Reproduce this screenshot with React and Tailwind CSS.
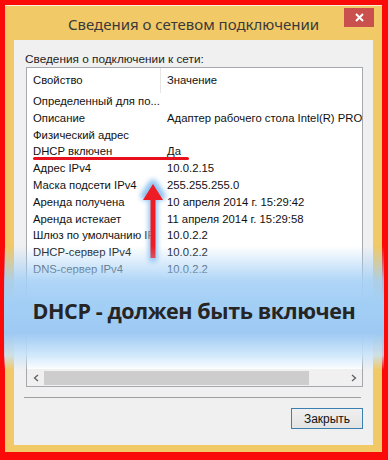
const rows = [
  ["Определенный для по...", ""],
  ["Описание", "Адаптер рабочего стола Intel(R) PRO/1000 MT"],
  ["Физический адрес", ""],
  ["DHCP включен", "Да"],
  ["Адрес IPv4", "10.0.2.15"],
  ["Маска подсети IPv4", "255.255.255.0"],
  ["Аренда получена", "10 апреля 2014 г. 15:29:42"],
  ["Аренда истекает", "11 апреля 2014 г. 15:29:58"],
  ["Шлюз по умолчанию IP", "10.0.2.2"],
  ["DHCP-сервер IPv4", "10.0.2.2"],
  ["DNS-сервер IPv4", "10.0.2.2"],
];

function Arrow() {
  return (
    <svg width="40" height="100" viewBox="0 0 40 100" className="absolute left-[133px] top-[170px]">
      <defs>
        <filter id="glow" x="-50%" y="-50%" width="200%" height="200%">
          <feGaussianBlur stdDeviation="2.5" />
        </filter>
      </defs>
      <g stroke="#8ec3f2" strokeWidth="9" fill="none" strokeLinecap="round" strokeLinejoin="round" filter="url(#glow)">
        <path d="M20 16 L20 88" />
        <path d="M12 26 L20 14 L28 26" />
      </g>
      <path d="M20 24 L20 88" stroke="#ee1c25" strokeWidth="5" />
      <path d="M10 30 L20 14 L30 30 Z" fill="#ee1c25" />
    </svg>
  );
}

export default function App() {
  return (
    <div className="relative w-[388px] h-[460px] overflow-hidden bg-[#fb0a0a] pt-[5px] pl-[5px] font-['Liberation_Sans',sans-serif]">
      <div className="w-[377px] h-[447px] bg-[#f1c966] border-t border-[#f7f0dc] flex flex-col">
        <div className="relative h-[34px] flex items-center justify-center">
          <span className="text-[15px] text-[#3a3a3a] font-['Noto_Sans',sans-serif] mt-[2px]">
            Сведения о сетевом подключении
          </span>
          <div className="absolute right-[8px] top-[2px] w-[30px] h-[19px] bg-[#c9504c] flex items-center justify-center">
            <svg width="9" height="9" viewBox="0 0 9 9">
              <path d="M1 1 L8 8 M8 1 L1 8" stroke="#fff" strokeWidth="2" />
            </svg>
          </div>
        </div>
        <div className="mx-[9px] h-[405px] bg-[#f0f0f0] flex flex-col pl-[11px] pr-[10px]">
          <div className="pt-[12px] h-[27px] text-[11.8px] text-[#1e1e1e] leading-[15px]">
            Сведения о подключении к сети:
          </div>
          <div className="ml-[1px] w-[337px] h-[320px] bg-white border border-[#a5a8ad] flex flex-col text-[11.3px] text-[#111]">
            <div className="flex h-[25px] shrink-0">
              <div className="w-[134px] pl-[6px] flex items-center border-r border-[#e5e5e5]">Свойство</div>
              <div className="pl-[6px] flex items-center">Значение</div>
            </div>
            <div className="flex-1 overflow-hidden">
              {rows.map(([k, v]) => (
                <div key={k} className="flex h-[16.8px] items-center whitespace-nowrap">
                  <div className="w-[134px] shrink-0 pl-[6px] overflow-hidden">{k}</div>
                  <div className="pl-[6px]">{v}</div>
                </div>
              ))}
            </div>
            <div className="h-[17px] shrink-0 flex items-center bg-[#f0f0f0]">
              <div className="w-[17px] flex justify-center">
                <svg width="6" height="8" viewBox="0 0 6 8">
                  <path d="M5 1 L1.5 4 L5 7" stroke="#606060" strokeWidth="1.3" fill="none" />
                </svg>
              </div>
              <div className="w-[265px] h-[14px] bg-[#cdcdcd]" />
              <div className="flex-1" />
              <div className="w-[17px] flex justify-center">
                <svg width="6" height="8" viewBox="0 0 6 8">
                  <path d="M1 1 L4.5 4 L1 7" stroke="#606060" strokeWidth="1.3" fill="none" />
                </svg>
              </div>
            </div>
          </div>
          <div className="mt-[10px] ml-[-1px] w-[337px] h-[2px] border-t border-[#a0a0a0] border-b-white" />
          <div className="mt-[9px] flex justify-end">
            <button className="w-[72px] h-[21px] border border-[#3c7fb1] bg-[linear-gradient(to_bottom,#f0f0f0,#e3e3e3)] text-[12px] text-[#111]">
              Закрыть
            </button>
          </div>
        </div>
      </div>

      <div className="absolute left-[33px] top-[157px] w-[156px] h-[3px] bg-[#e8101c] rounded-full" />
      <Arrow />

      <div className="absolute left-[4px] top-[246px] w-[380px] h-[124px] bg-[linear-gradient(to_bottom,rgba(165,208,246,0)_0%,rgba(165,208,246,0.88)_28%,#a4cff5_45%,#9ec9f3_70%,rgba(200,228,250,0.85)_88%,rgba(240,248,255,0)_100%)] flex items-center justify-center">
        <span className="text-[21.5px] font-bold text-[#252525] font-['Open_Sans',sans-serif] tracking-[-0.4px] mt-[6px]">
          DHCP - должен быть включен
        </span>
      </div>
    </div>
  );
}
